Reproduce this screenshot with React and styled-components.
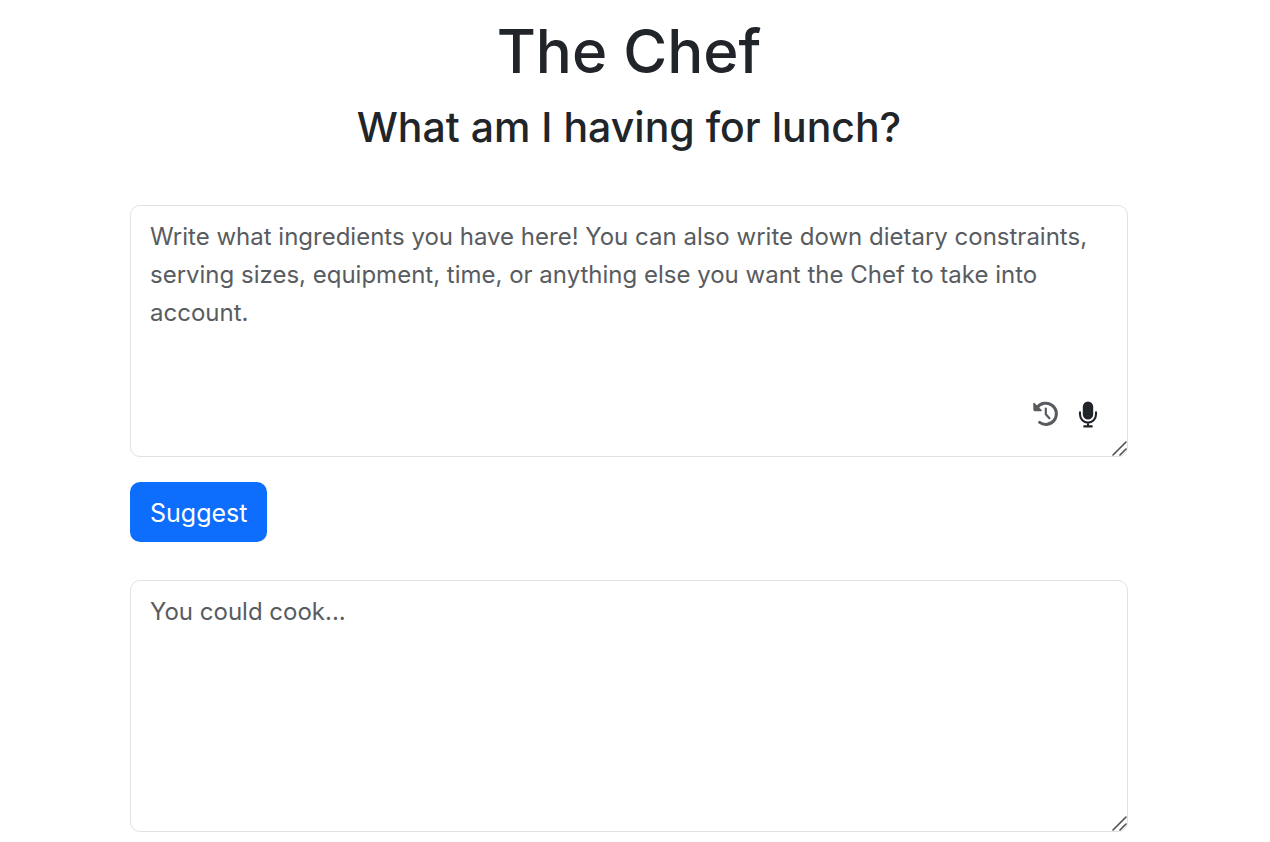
import React, { useState } from 'react';
import styled, { createGlobalStyle } from 'styled-components';

const HistoryIcon = () => (
    <svg width="28" height="28" viewBox="0 0 28 28" fill="none">
        <path
            d="M5.2 7.6A10.6 10.6 0 1 1 7.6 22.4"
            stroke="currentColor"
            strokeWidth="3"
            strokeLinecap="round"
        />
        <path
            d="M2 3.6v6q0 .9.9.9h6.2z"
            fill="currentColor"
            stroke="currentColor"
            strokeWidth="1.4"
            strokeLinejoin="round"
        />
        <path
            d="M13.8 8.6v5.6l3.6 4"
            stroke="currentColor"
            strokeWidth="2.2"
            strokeLinecap="round"
            strokeLinejoin="round"
        />
    </svg>
);

const MicIcon = () => (
    <svg width="28" height="28" viewBox="0 0 28 28" fill="none">
        <rect x="8.8" y="1.6" width="10.4" height="18" rx="5.2" fill="currentColor" />
        <path
            d="M6 12.2v2.4a8 8 0 0 0 16 0v-2.4M14 22.6v4M10.2 26.4h7.6"
            stroke="currentColor"
            strokeWidth="2.1"
            strokeLinecap="round"
        />
    </svg>
);

export default function App() {
    const [ingredients, setIngredients] = useState('');

    return (
        <>
            <GlobalStyle />
            <Page>
                <Title>The Chef</Title>
                <Subtitle>What am I having for lunch?</Subtitle>
                <Form onSubmit={e => e.preventDefault()}>
                    <Field>
                        <TextBox
                            aria-label="Ingredients"
                            placeholder="Write what ingredients you have here! You can also write down dietary constraints, serving sizes, equipment, time, or anything else you want the Chef to take into account."
                            value={ingredients}
                            onChange={e => setIngredients(e.target.value)}
                        />
                        <Tools>
                            <IconButton type="button" aria-label="History" $muted>
                                <HistoryIcon />
                            </IconButton>
                            <IconButton type="button" aria-label="Dictate">
                                <MicIcon />
                            </IconButton>
                        </Tools>
                    </Field>
                    <SuggestButton type="submit">Suggest</SuggestButton>
                    <TextBox
                        aria-label="Suggestion"
                        placeholder="You could cook..."
                        readOnly
                    />
                </Form>
            </Page>
        </>
    );
}

const GlobalStyle = createGlobalStyle`
    body {
        margin: 0;
        background: #fff;
        color: #212529;
        font-family: Inter, 'Liberation Sans', sans-serif;
    }

    *, *::before, *::after {
        box-sizing: border-box;
    }
`;

const Page = styled.main`
    max-width: 1058px;
    margin-right: auto;
    margin-left: auto;
    padding: 12px 36px 10px 24px;
`;

const Title = styled.h1`
    margin: 0;
    font-size: 60px;
    font-weight: 500;
    line-height: 78px;
    text-align: center;
`;

const Subtitle = styled.h2`
    margin: 10px 0 50px;
    font-size: 41px;
    font-weight: 500;
    line-height: 55px;
    text-align: center;
`;

const Form = styled.form`
    display: flex;
    flex-direction: column;
    align-items: flex-start;
`;

const Field = styled.div`
    position: relative;
    width: 100%;
`;

const TextBox = styled.textarea`
    display: block;
    width: 100%;
    height: 252px;
    padding: 12px 19px;
    border: 1px solid #dee2e6;
    border-radius: 10px;
    background: #fff;
    color: inherit;
    font-family: inherit;
    font-size: 24px;
    line-height: 38px;
    resize: vertical;

    &::placeholder {
        color: #585c60;
        opacity: 1;
    }

    &::-webkit-scrollbar {
        width: 16px;
        height: 16px;
    }

    &::-webkit-resizer {
        background: url("data:image/svg+xml,%3Csvg xmlns='http://www.w3.org/2000/svg' width='16' height='16'%3E%3Cpath d='M1 14 14 1M8 14l6-6' stroke='%23505050' stroke-width='1.6' stroke-linecap='round'/%3E%3C/svg%3E")
            no-repeat;
    }
`;

const Tools = styled.div`
    position: absolute;
    right: 26px;
    bottom: 29px;
    display: flex;
    gap: 14px;
`;

const IconButton = styled.button`
    display: flex;
    align-items: center;
    justify-content: center;
    width: 28px;
    height: 28px;
    padding: 0;
    border: 0;
    background: none;
    color: ${props => (props.$muted ? '#585c60' : '#212529')};
    cursor: pointer;
`;

const SuggestButton = styled.button`
    margin: 25px 0 38px;
    padding: 12px 20px 10px;
    border: 0;
    border-radius: 10px;
    background: #0d6efd;
    color: #fff;
    font-family: inherit;
    font-size: 25px;
    line-height: 38px;
    cursor: pointer;
`;
